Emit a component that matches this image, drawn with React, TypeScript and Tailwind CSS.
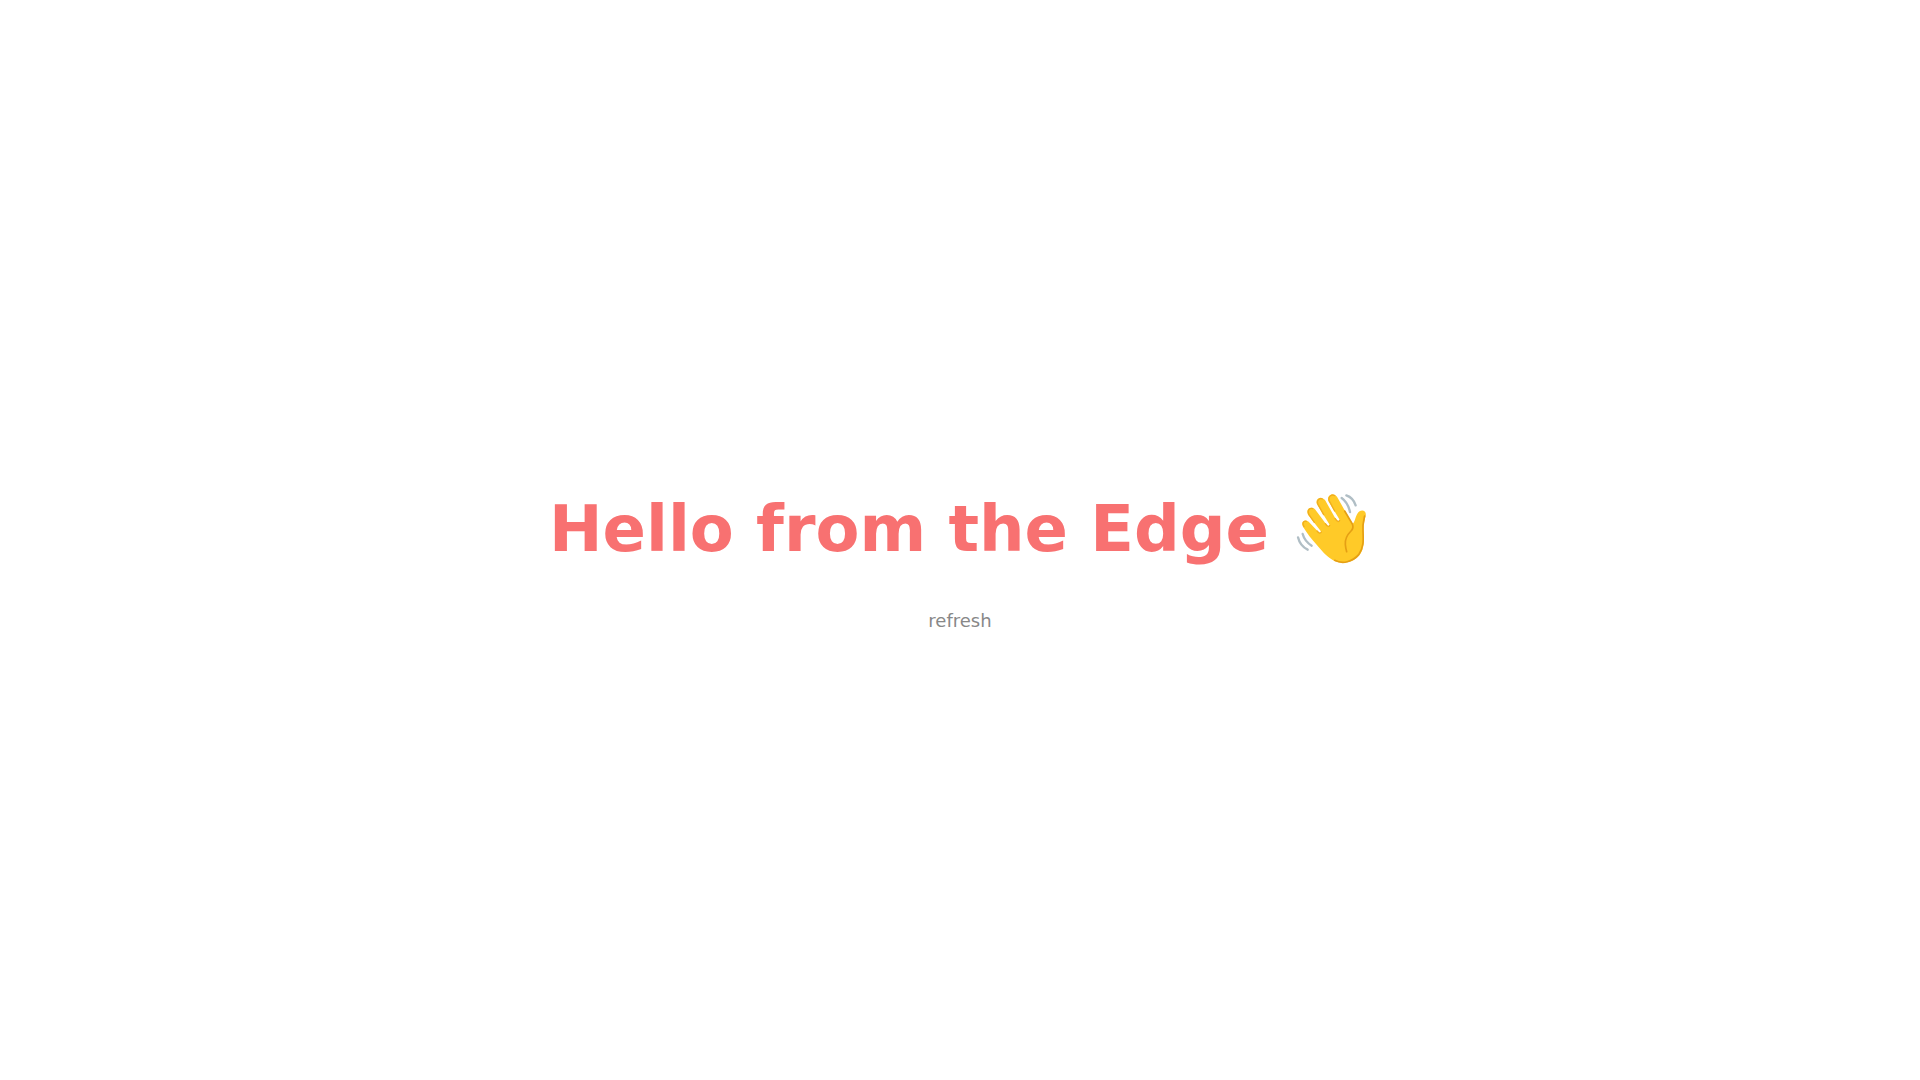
function WavingHand({ className }: { className?: string }) {
  return (
    <svg className={className} viewBox="3 -1 240 240" fill="none" strokeLinecap="round" strokeLinejoin="round" role="img" aria-label="waving hand">
      <path
        fill="#FFCA28"
        d="M39 112C31 98 43 87 56 97L86 129C90 133 95 129 92 125L54 76C46 60 61 49 75 60L112 109C116 113 121 109 118 105L81 45C74 29 91 19 105 32L140 94C145 99 150 95 148 90L115 35C109 17 130 8 141 22L187 104C195 98 195 85 202 73C211 57 231 62 227 79C224 92 219 106 221 126C222 150 224 177 208 198C189 222 152 226 128 212C106 198 96 184 80 166C65 149 51 132 39 112Z"
      />
      <g stroke="#F0AE1E" strokeWidth="4">
        <path d="M42 112C35 101 41 94 49 96" />
        <path d="M73 99L57 76C50 62 61 55 68 58" />
        <path d="M101 76L84 45C78 31 91 25 97 29" />
        <path d="M134 65L118 35C113 20 127 14 134 19" />
        <path d="M81 125Q90 136 94 128M106 103Q115 116 119 108M135 87Q145 102 149 93" />
      </g>
      <g stroke="#E59F14" strokeWidth="5">
        <path d="M164 65L187 104C190 111 189 119 183 125C169 139 165 151 166 165Q167 177 170 187" />
        <path d="M224 80C221 93 217 106 219 126C220 150 222 175 206 196C187 218 158 225 134 213" />
      </g>
      <g stroke="#B0BEC5" strokeWidth="7">
        <path d="M169 18Q190 25 197 48" />
        <path d="M155 26Q174 40 180 68" />
        <path d="M24 144Q30 170 53 181" />
        <path d="M38 134Q44 156 65 169" />
      </g>
    </svg>
  );
}

export default function App() {
  return (
    <main className="flex min-h-screen flex-col items-center justify-center gap-[38px] bg-white pt-11 font-['DejaVu_Sans',sans-serif]">
      <h1 className="flex items-center gap-[22px] text-[64px] leading-[80px] font-bold text-[#f87171]">
        Hello from the Edge
        <WavingHand className="size-20 shrink-0" />
      </h1>
      <a href="#" className="text-lg text-[#888888]">refresh</a>
    </main>
  );
}
